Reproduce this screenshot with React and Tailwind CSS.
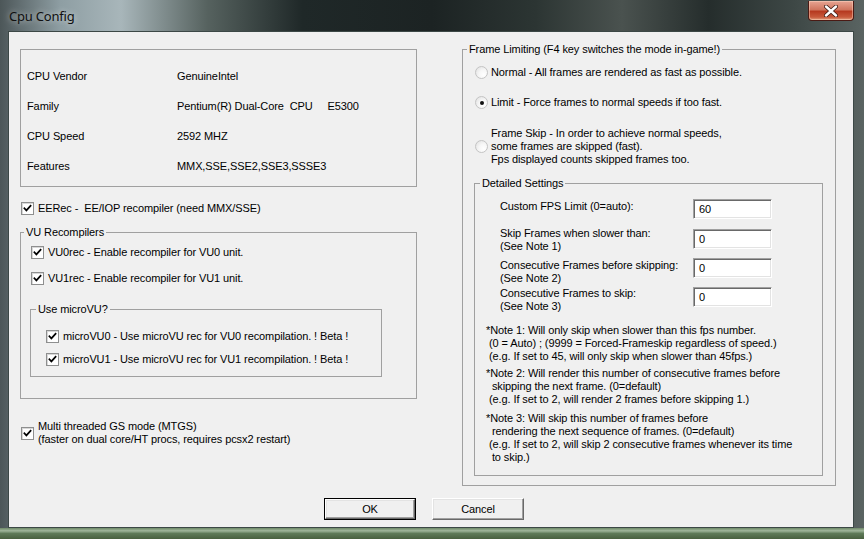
import React from "react";

function Check() {
  return (
    <span className="w-[13px] h-[13px] shrink-0 border border-[#8e8f8f] bg-white shadow-[inset_1px_1px_0_#d8d8d8] flex items-center justify-center">
      <svg width="11" height="11" viewBox="0 0 11 11">
        <path d="M2.4 5.2 L4.4 7.4 L8.6 2.8" stroke="#000" strokeWidth="1.7" fill="none" strokeLinecap="square" />
      </svg>
    </span>
  );
}

function Radio({ sel }) {
  return (
    <span className="w-[13px] h-[13px] shrink-0 rounded-full border border-[#c4c4c4] bg-[radial-gradient(circle_at_70%_70%,#ffffff_0%,#f6f6f6_45%,#dedede_100%)] flex items-center justify-center">
      {sel && <span className="w-[4px] h-[4px] rounded-full bg-[#111]" />}
    </span>
  );
}

function TextBox({ value }) {
  return (
    <div className="w-[79px] h-[20px] shrink-0 bg-white border border-t-[#a0a0a0] border-l-[#a0a0a0] border-b-white border-r-white shadow-[inset_1px_1px_0_#696969,inset_-1px_-1px_0_#e3e3e3] pl-[5px] flex items-center">
      {value}
    </div>
  );
}

function CheckRow({ children, className = "" }) {
  return (
    <div className={"flex items-center h-[13px] " + className}>
      <Check />
      <span className="ml-[4px] whitespace-pre">{children}</span>
    </div>
  );
}

export default function App() {
  return (
    <div className="w-[864px] h-[539px] overflow-hidden flex flex-col bg-[linear-gradient(90deg,#4c5658_0%,#8e9ea3_7%,#a8b6ba_14%,#56625f_24%,#1f2828_35%,#1c2323_50%,#2c3533_62%,#4a524f_72%,#252d2c_82%,#3e4846_92%,#5a6462_100%)] font-['Liberation_Sans',Arial,sans-serif] text-[11px] leading-[13px] tracking-[-0.1px] text-black">
      {/* title bar */}
      <div className="h-[31px] flex items-start shrink-0">
        <div className="ml-[9px] mt-[8px] font-['Noto_Sans',sans-serif] text-[13px] leading-[17px] tracking-[-0.2px] text-[#101010] [text-shadow:0_0_6px_rgba(255,255,255,0.7)]">
          Cpu Config
        </div>
        <div className="flex-1" />
        <div className="mr-[10px] mt-[1px] w-[46px] h-[20px] rounded-b-[4px] border border-[#4a1a14] border-t-0 bg-[linear-gradient(180deg,#e7a593_0%,#d0765f_45%,#b63a20_55%,#c85a3c_85%,#e0a080_100%)] shadow-[inset_0_0_0_1px_rgba(255,220,200,0.45)] flex items-center justify-center">
          <svg width="14" height="12" viewBox="0 0 14 12">
            <path d="M2 1.5 L12 10.5 M12 1.5 L2 10.5" stroke="#3a1a12" strokeWidth="4" strokeLinecap="round" />
            <path d="M2 1.5 L12 10.5 M12 1.5 L2 10.5" stroke="#ffffff" strokeWidth="2.4" strokeLinecap="round" />
          </svg>
        </div>
      </div>

      {/* client */}
      <div className="mx-[8px] w-[846px] h-[497px] shrink-0 bg-[#f0f0f0] border border-[#3c4846] flex flex-col">
        <div className="flex">
          {/* left column */}
          <div className="ml-[11px] w-[397px] flex flex-col">
            <div className="mt-[17px] h-[138px] border border-[#a0a0a0] pt-[11px] pl-[6px]">
              {[
                ["CPU Vendor", "GenuineIntel"],
                ["Family", "Pentium(R) Dual-Core  CPU     E5300"],
                ["CPU Speed", "2592 MHZ"],
                ["Features", "MMX,SSE,SSE2,SSE3,SSSE3"],
              ].map(([k, v]) => (
                <div key={k} className="h-[30px] flex items-center">
                  <span className="w-[150px] shrink-0">{k}</span>
                  <span className="whitespace-pre">{v}</span>
                </div>
              ))}
            </div>

            <CheckRow className="mt-[15px] ml-[1px]">EERec -  EE/IOP recompiler (need MMX/SSE)</CheckRow>

            <fieldset className="mt-[11px] border border-[#a0a0a0] pb-[21px]">
              <legend className="ml-[3px] px-[2px]">VU Recompilers</legend>
              <CheckRow className="mt-[7px] ml-[10px]">VU0rec - Enable recompiler for VU0 unit.</CheckRow>
              <CheckRow className="mt-[13px] ml-[10px]">VU1rec - Enable recompiler for VU1 unit.</CheckRow>
              <fieldset className="mt-[18px] ml-[9px] w-[352px] border border-[#a0a0a0] pb-[10px]">
                <legend className="ml-[5px] px-[2px]">Use microVU?</legend>
                <CheckRow className="mt-[14px] ml-[15px]">microVU0 - Use microVU rec for VU0 recompilation. ! Beta !</CheckRow>
                <CheckRow className="mt-[10px] ml-[15px]">microVU1 - Use microVU rec for VU1 recompilation. ! Beta !</CheckRow>
              </fieldset>
            </fieldset>

            <div className="mt-[21px] ml-[1px] flex items-center">
              <Check />
              <div className="ml-[4px] whitespace-nowrap">
                <div>Multi threaded GS mode (MTGS)</div>
                <div>(faster on dual core/HT procs, requires pcsx2 restart)</div>
              </div>
            </div>
          </div>

          {/* right column */}
          <div className="ml-[45px] w-[374px] flex flex-col">
            <fieldset className="mt-[11px] border border-[#a0a0a0] pb-[9px]">
              <legend className="ml-[4px] px-[2px]">Frame Limiting (F4 key switches the mode in-game!)</legend>
              <div className="mt-[10px] ml-[12px] flex items-center h-[13px]">
                <Radio />
                <span className="ml-[3px]">Normal - All frames are rendered as fast as possible.</span>
              </div>
              <div className="mt-[17px] ml-[12px] flex items-center h-[13px]">
                <Radio sel />
                <span className="ml-[3px]">Limit - Force frames to normal speeds if too fast.</span>
              </div>
              <div className="mt-[18px] ml-[12px] flex items-center">
                <Radio />
                <div className="ml-[3px]">
                  <div>Frame Skip - In order to achieve normal speeds,</div>
                  <div>some frames are skipped (fast).</div>
                  <div>Fps displayed counts skipped frames too.</div>
                </div>
              </div>

              <fieldset className="mt-[11px] ml-[11px] w-[349px] border border-[#a0a0a0] pb-[11px]">
                <legend className="ml-[5px] px-[2px]">Detailed Settings</legend>

                <div className="mt-[9px] pl-[25px] h-[20px] flex items-start">
                  <div className="w-[193px] shrink-0 mt-[1px]">Custom FPS Limit (0=auto):</div>
                  <TextBox value="60" />
                </div>
                <div className="mt-[10px] pl-[25px] h-[20px] flex items-start">
                  <div className="w-[193px] shrink-0 -mt-[2px]">
                    <div>Skip Frames when slower than:</div>
                    <div>(See Note 1)</div>
                  </div>
                  <TextBox value="0" />
                </div>
                <div className="mt-[9px] pl-[25px] h-[20px] flex items-start">
                  <div className="w-[193px] shrink-0 mt-[1px]">
                    <div>Consecutive Frames before skipping:</div>
                    <div>(See Note 2)</div>
                  </div>
                  <TextBox value="0" />
                </div>
                <div className="mt-[9px] pl-[25px] h-[20px] flex items-start">
                  <div className="w-[193px] shrink-0">
                    <div>Consecutive Frames to skip:</div>
                    <div>(See Note 3)</div>
                  </div>
                  <TextBox value="0" />
                </div>

                <div className="mt-[17px] pl-[11px] whitespace-pre">
                  <div>*Note 1: Will only skip when slower than this fps number.</div>
                  <div> (0 = Auto) ; (9999 = Forced-Frameskip regardless of speed.)</div>
                  <div> (e.g. If set to 45, will only skip when slower than 45fps.)</div>
                </div>
                <div className="mt-[4px] pl-[11px] whitespace-pre">
                  <div>*Note 2: Will render this number of consecutive frames before</div>
                  <div>  skipping the next frame. (0=default)</div>
                  <div> (e.g. If set to 2, will render 2 frames before skipping 1.)</div>
                </div>
                <div className="mt-[6px] pl-[11px] whitespace-pre">
                  <div>*Note 3: Will skip this number of frames before</div>
                  <div>  rendering the next sequence of frames. (0=default)</div>
                  <div> (e.g. If set to 2, will skip 2 consecutive frames whenever its time</div>
                  <div>  to skip.)</div>
                </div>
              </fieldset>
            </fieldset>
          </div>
        </div>

        {/* buttons */}
        <div className="mt-[12px] pl-[315px] flex gap-[16px]">
          <div className="w-[92px] h-[22px] border border-black">
            <div className="w-full h-full border border-t-white border-l-white border-b-[#696969] border-r-[#696969] shadow-[inset_-1px_-1px_0_#a0a0a0,inset_1px_1px_0_#e3e3e3] flex items-center justify-center">
              OK
            </div>
          </div>
          <div className="w-[92px] h-[22px] border border-t-white border-l-white border-b-[#696969] border-r-[#696969] shadow-[inset_-1px_-1px_0_#a0a0a0,inset_1px_1px_0_#e3e3e3] flex items-center justify-center">
            Cancel
          </div>
        </div>
      </div>

      {/* bottom frame */}
      <div className="flex-1 bg-[linear-gradient(180deg,#6f8a68_0%,#9fb59a_25%,#5e7a58_50%,#48603f_100%)]" />
    </div>
  );
}
